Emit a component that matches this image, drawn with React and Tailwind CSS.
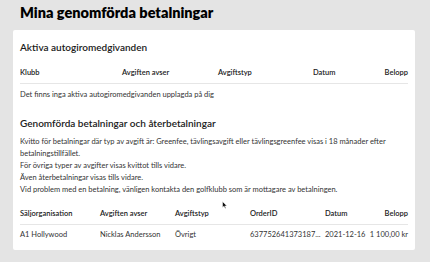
import React from "react";

const autoCols = ["Klubb", "Avgiften avser", "Avgiftstyp", "Datum", "Belopp"];

const payments = [
  {
    org: "A1 Hollywood",
    avser: "Nicklas Andersson",
    typ: "Övrigt",
    order: "637752641373187...",
    datum: "2021-12-16",
    belopp: "1 100,00 kr",
  },
];

export default function App() {
  return (
    <div
      className="w-[430px] h-[262px] overflow-hidden bg-[#e4e4e4] text-[#1a1a1a] pl-[13px] pr-[15px]"
      style={{ fontFamily: "Lato, 'Noto Sans', sans-serif" }}
    >
      <h1 className="h-[30px] pl-[7px] pt-[3px] text-[14.5px] font-extrabold leading-[20px] text-black">
        Mina genomförda betalningar
      </h1>

      <div className="relative bg-white rounded-[2px] px-[7px] pt-[10px] pb-[10px]">
        <h2 className="text-[10px] font-semibold leading-[14px]">Aktiva autogiromedgivanden</h2>

        <div className="mt-[14px] grid grid-cols-[102px_96px_95px_1fr_auto] text-[7.5px] font-semibold leading-[10px] pb-[5px] border-b border-[#e6e6e6]">
          {autoCols.map((c) => (
            <div key={c}>{c}</div>
          ))}
        </div>
        <p className="mt-[6px] text-[7.5px] leading-[10px] text-[#333]">
          Det finns inga aktiva autogiromedgivanden upplagda på dig
        </p>

        <h2 className="mt-[16px] text-[10px] font-semibold leading-[14px]">
          Genomförda betalningar och återbetalningar
        </h2>
        <div className="mt-[6px] text-[7.5px] leading-[12px] text-[#333]">
          <p>
            Kvitto för betalningar där typ av avgift är: Greenfee, tävlingsavgift eller tävlingsgreenfee visas i 18 månader efter
            betalningstillfället.
          </p>
          <p>För övriga typer av avgifter visas kvittot tills vidare.</p>
          <p>Även återbetalningar visas tills vidare.</p>
          <p>Vid problem med en betalning, vänligen kontakta den golfklubb som är mottagare av betalningen.</p>
        </div>

        <div className="mt-[13px] grid grid-cols-[80px_75px_75px_75px_1fr_auto] text-[7.5px] font-semibold leading-[10px] pb-[5px] border-b border-[#e6e6e6]">
          <div>Säljorganisation</div>
          <div>Avgiften avser</div>
          <div>Avgiftstyp</div>
          <div>OrderID</div>
          <div>Datum</div>
          <div className="text-right">Belopp</div>
        </div>
        {payments.map((p) => (
          <div
            key={p.order}
            className="grid grid-cols-[80px_75px_75px_75px_1fr_auto] text-[7.5px] leading-[10px] text-[#333] pt-[5px]"
          >
            <div>{p.org}</div>
            <div>{p.avser}</div>
            <div>{p.typ}</div>
            <div>{p.order}</div>
            <div>{p.datum}</div>
            <div className="text-right">{p.belopp}</div>
          </div>
        ))}

        <svg className="absolute left-[209px] top-[171px]" width="6" height="8" viewBox="0 0 6 8">
          <path d="M0.5 0.5 L0.5 6.5 L2 5.2 L3.2 7.5 L4 7.1 L2.9 4.9 L5 4.9 Z" fill="#111" stroke="#fff" strokeWidth="0.5" />
        </svg>
      </div>
    </div>
  );
}
